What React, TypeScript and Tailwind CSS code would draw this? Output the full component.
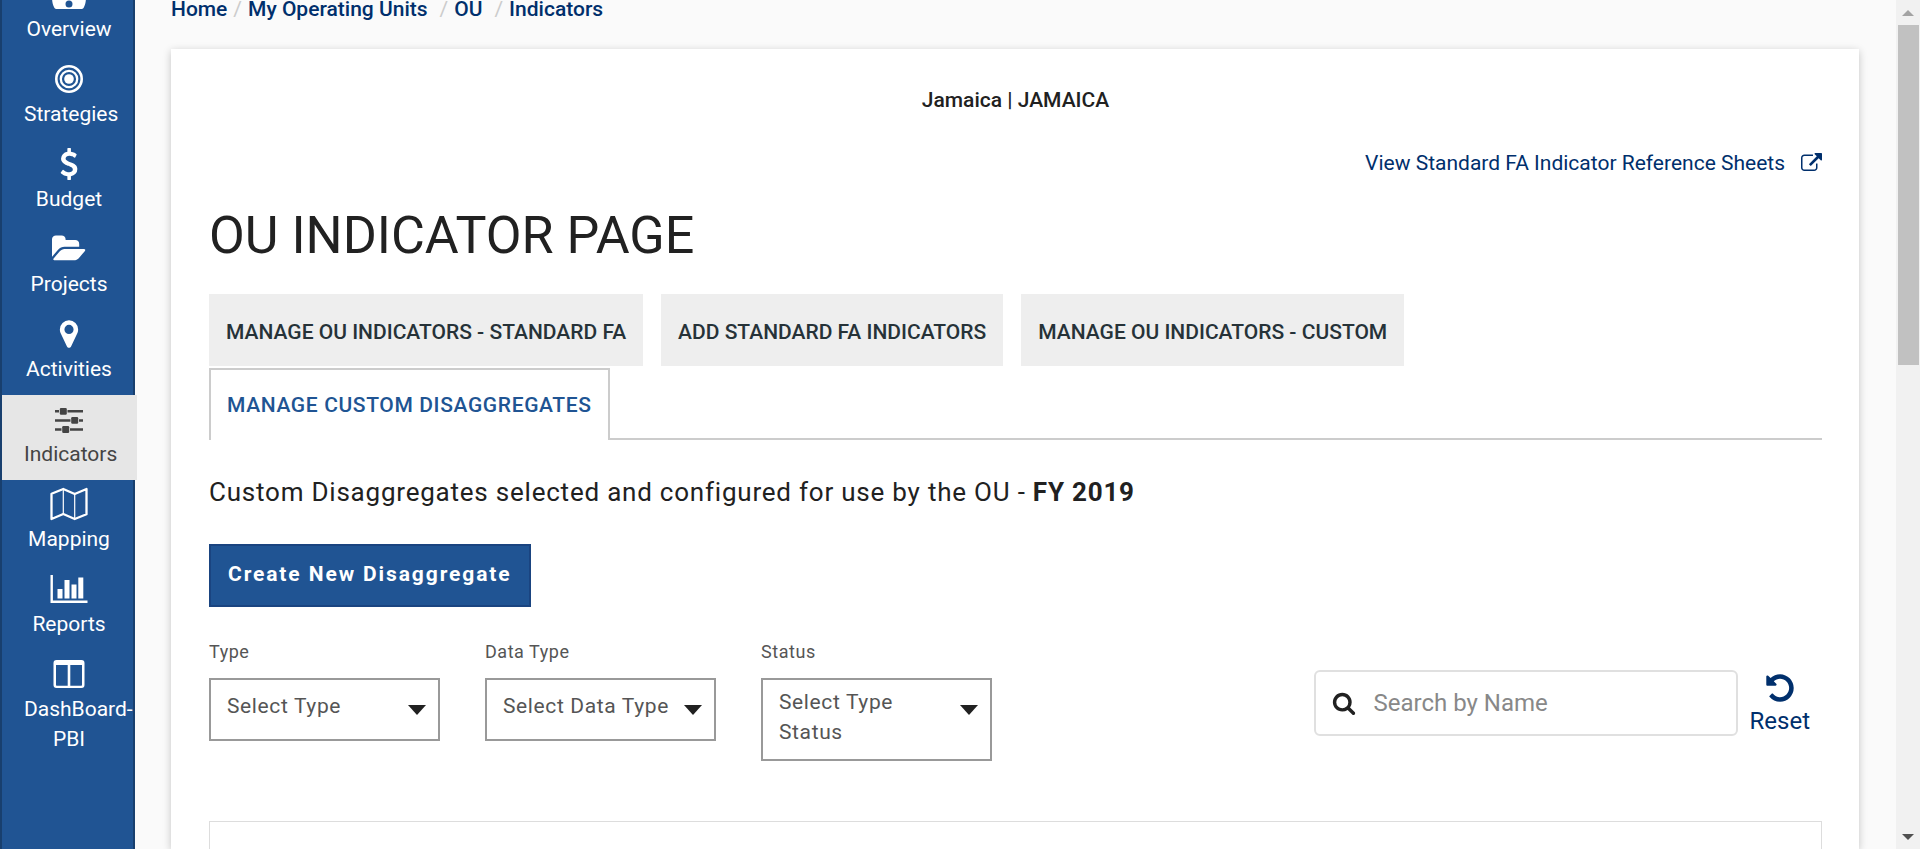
import React from "react";

type IconProps = { className?: string };

const OverviewIcon = ({ className }: IconProps) => (
  <svg viewBox="0 0 34 32" className={className} fill="currentColor" aria-hidden="true">
    <path
      fillRule="evenodd"
      d="M17 2A17 17 0 0 0 0 19c0 4 .6 7.300 2.200 10.600.4.900 1 1.400 1.900 1.400h25.800c.9 0 1.500-.5 1.900-1.400C33.400 26.300 34 23 34 19A17 17 0 0 0 17 2zm0 20.500a3.500 3.500 0 1 1 0 7 3.500 3.500 0 0 1 0-7zM5.500 17a2 2 0 1 1 0 4 2 2 0 0 1 0-4zm23 0a2 2 0 1 1 0 4 2 2 0 0 1 0-4zM17 5.500a2 2 0 1 1 0 4 2 2 0 0 1 0-4z"
    />
  </svg>
);

const StrategiesIcon = ({ className }: IconProps) => (
  <svg viewBox="0 0 32 32" className={className} fill="none" stroke="currentColor" aria-hidden="true">
    <circle cx="16" cy="16" r="12.700" strokeWidth="2.600" />
    <circle cx="16" cy="16" r="8.200" strokeWidth="2.300" />
    <circle cx="16" cy="16" r="4.800" fill="currentColor" stroke="none" />
  </svg>
);

const BudgetIcon = ({ className }: IconProps) => (
  <svg viewBox="0 0 1792 1792" className={className} fill="currentColor" aria-hidden="true">
    <path d="M1362 1185q0 153-99.500 263.500t-258.500 136.500v175q0 14-9 23t-23 9h-135q-13 0-22.500-9.500t-9.500-22.500v-175q-66-9-127.500-31t-101.500-44.500-74-48-46.500-37.500-17.500-18q-17-21-2-41l103-135q7-10 23-12 15-2 24 9l2 2q113 99 243 125 37 8 74 8 81 0 142.500-43t61.500-122q0-28-15-53t-33.500-42-58.500-37.500-66-32-80-32.500q-39-16-61.500-25t-61.500-26.500-62.500-31-56.500-35.500-53.500-42.500-43.500-49-35.500-58-21-66.500-8.500-78q0-138 98-242t255-134v-180q0-13 9.500-22.500t22.500-9.500h135q14 0 23 9t9 23v176q57 6 110.500 23t87 33.500 63.500 37.500 39 29 15 14q17 18 5 38l-81 146q-8 15-23 16-14 3-27-7-3-3-14.500-12t-39-26.500-58.500-32-74.500-26-85.500-11.500q-95 0-155 43t-60 111q0 26 8.500 48t29.500 41.500 39.500 33 56 31 60.500 27 70 27.500q53 20 81 31.500t76 35 75.500 42.500 62 50 53 63.500 31.500 76.500 13 94z" />
  </svg>
);

const ProjectsIcon = ({ className }: IconProps) => (
  <svg viewBox="0 0 1920 1792" className={className} fill="currentColor" aria-hidden="true">
    <path d="M1879 952q0 31-31 66l-336 396q-43 51-120.500 86.500t-143.500 35.500h-1088q-34 0-60.500-13t-26.500-43q0-31 31-66l336-396q43-51 120.500-86.500t143.500-35.500h1088q34 0 60.500 13t26.500 43zm-343-344v160h-832q-94 0-197 47.500t-164 119.500l-337 396-5 6q0-4-.5-12.500t-.5-12.500v-960q0-92 66-158t158-66h320q92 0 158 66t66 158v32h544q92 0 158 66t66 158z" />
  </svg>
);

const ActivitiesIcon = ({ className }: IconProps) => (
  <svg viewBox="0 0 1792 1792" className={className} fill="currentColor" aria-hidden="true">
    <path d="M1152 640q0-106-75-181t-181-75-181 75-75 181 75 181 181 75 181-75 75-181zm256 0q0 109-33 179l-364 774q-16 33-47.500 52t-67.500 19-67.500-19-46.500-52l-365-774q-33-70-33-179 0-212 150-362t362-150 362 150 150 362z" />
  </svg>
);

const IndicatorsIcon = ({ className }: IconProps) => (
  <svg viewBox="0 0 32 32" className={className} fill="currentColor" aria-hidden="true">
    <path d="M2 7h4v2.500H2zM14.500 7H30v2.500H14.500zM2 16.200h15.500v2.500H2zM26 16.200h4v2.500h-4zM2 25.300h6.500v2.500H2zM17 25.300h13v2.500H17z" />
    <rect x="6.800" y="4.900" width="7" height="6.800" rx="1.200" />
    <rect x="18.200" y="14" width="7" height="6.800" rx="1.200" />
    <rect x="9.200" y="23.100" width="7" height="6.800" rx="1.200" />
  </svg>
);

const MappingIcon = ({ className }: IconProps) => (
  <svg viewBox="0 0 38 34" className={className} fill="none" stroke="currentColor" strokeLinejoin="round" aria-hidden="true">
    <path strokeWidth="2.300" d="M1.500 6.800 13.300 2l11.400 5L36.500 2v25.300L24.700 32l-11.400-5L1.500 32z" />
    <path strokeWidth="1.200" d="M13.300 2v25M24.700 7v25" />
  </svg>
);

const ReportsIcon = ({ className }: IconProps) => (
  <svg viewBox="0 0 38 32" className={className} fill="currentColor" aria-hidden="true">
    <path d="M.5 2h2.400v25.600h34.600V30H.5zM7.500 16h5v9.500h-5zM14.500 7h5v18.500h-5zM21.500 11.500h5v14h-5zM28.300 4.500h5v21h-5z" />
  </svg>
);

const DashboardIcon = ({ className }: IconProps) => (
  <svg viewBox="0 0 32 32" className={className} fill="currentColor" aria-hidden="true">
    <path
      fillRule="evenodd"
      d="M3.500 2h25A3 3 0 0 1 31.500 5v22a3 3 0 0 1-3 3h-25a3 3 0 0 1-3-3V5a3 3 0 0 1 3-3zM3 7v20q0 .7.7.7h11V7zm14.300 0v20.700h11q.7 0 .7-.7V7z"
    />
  </svg>
);

const ExternalLinkIcon = ({ className }: IconProps) => (
  <svg viewBox="0 0 1792 1792" className={className} fill="currentColor" aria-hidden="true">
    <path d="M1408 928v320q0 119-84.500 203.500t-203.500 84.500h-832q-119 0-203.500-84.500t-84.500-203.500v-832q0-119 84.500-203.500t203.500-84.500h704q14 0 23 9t9 23v64q0 14-9 23t-23 9h-704q-66 0-113 47t-47 113v832q0 66 47 113t113 47h832q66 0 113-47t47-113v-320q0-14 9-23t23-9h64q14 0 23 9t9 23zm384-864v512q0 26-19 45t-45 19-45-19l-176-176-652 652q-10 10-23 10t-23-10l-114-114q-10-10-10-23t10-23l652-652-176-176q-19-19-19-45t19-45 45-19h512q26 0 45 19t19 45z" />
  </svg>
);

const SearchIcon = ({ className }: IconProps) => (
  <svg viewBox="0 0 1792 1792" className={className} fill="currentColor" aria-hidden="true">
    <path d="M1216 832q0-185-131.500-316.500t-316.500-131.500-316.500 131.500-131.500 316.500 131.500 316.500 316.500 131.500 316.500-131.500 131.500-316.500zm512 832q0 52-38 90t-90 38q-54 0-90-38l-343-342q-179 124-399 124-143 0-273.500-55.500t-225-150-150-225-55.500-273.500 55.500-273.500 150-225 225-150 273.500-55.500 273.500 55.500 225 150 150 225 55.500 273.500q0 220-124 399l343 343q37 37 37 90z" />
  </svg>
);

const UndoIcon = ({ className }: IconProps) => (
  <svg viewBox="0 0 1792 1792" className={className} fill="currentColor" aria-hidden="true">
    <path d="M1664 896q0 156-61 298t-164 245-245 164-298 61q-172 0-327-72.500t-264-204.500q-7-10-6.500-22.500t8.500-20.500l137-138q10-9 25-9 16 2 23 12 73 95 179 147t225 52q104 0 198.500-40.500t163.500-109.500 109.500-163.500 40.500-198.500-40.500-198.500-109.500-163.500-163.500-109.500-198.500-40.500q-98 0-188 35.500t-160 101.500l137 138q31 30 14 69-17 40-59 40h-448q-26 0-45-19t-19-45v-448q0-42 40-59 39-17 69 14l130 129q107-101 244.500-156.500t284.500-55.500q156 0 298 61t245 164 164 245 61 298z" />
  </svg>
);

const navItems = [
  { label: "Overview", Icon: OverviewIcon, size: "h-8 w-[34px]" },
  { label: "Strategies", Icon: StrategiesIcon, size: "size-8" },
  { label: "Budget", Icon: BudgetIcon, size: "size-8" },
  { label: "Projects", Icon: ProjectsIcon, size: "h-8 w-[34px]" },
  { label: "Activities", Icon: ActivitiesIcon, size: "size-8" },
  { label: "Indicators", Icon: IndicatorsIcon, size: "size-8", active: true },
  { label: "Mapping", Icon: MappingIcon, size: "h-[34px] w-[38px]" },
  { label: "Reports", Icon: ReportsIcon, size: "h-8 w-[38px]" },
  { label: "DashBoard-PBI", Icon: DashboardIcon, size: "size-8" },
];

function Sidebar() {
  return (
    <nav aria-label="Main" className="z-10 w-[135px] shrink-0 border-x-2 border-[#183f6e] bg-[#205493]">
      <ul className="-mt-[30px]">
        {navItems.map(({ label, Icon, size, active }) => (
          <li key={label}>
            <a
              href="#"
              aria-current={active ? "page" : undefined}
              className={
                active
                  ? "-mr-1 block min-h-[85px] bg-[#e6e6e6] pt-2 pr-[23px] pl-[22px] text-[#444444]"
                  : "-mr-1 block min-h-[85px] pt-2 pr-[23px] pl-[22px] text-white"
              }
            >
              <span className="flex h-8 items-center justify-center">
                <Icon className={`shrink-0 ${size}`} />
              </span>
              <span className="mt-1 block text-center text-[21px] leading-[30px]">{label}</span>
            </a>
          </li>
        ))}
      </ul>
    </nav>
  );
}

const crumbs = ["Home", "My Operating Units", "OU", "Indicators"];

function Breadcrumbs() {
  return (
    <nav aria-label="Breadcrumb" className="-mt-1.5">
      <ol className="flex text-[21px] leading-[30px] font-medium text-[#002f6c]">
        {crumbs.map((crumb, i) => (
          <li key={crumb} className="flex">
            {i > 0 && (
              <span className={i === 1 ? "mx-1.5 font-normal text-[#cccccc]" : "mr-1.5 ml-3 font-normal text-[#cccccc]"}>/</span>
            )}
            <a href="#">{crumb}</a>
          </li>
        ))}
      </ol>
    </nav>
  );
}

const tabs = ["MANAGE OU INDICATORS - STANDARD FA", "ADD STANDARD FA INDICATORS", "MANAGE OU INDICATORS - CUSTOM"];

function Tabs() {
  return (
    <div role="tablist" className="mt-[25px]">
      <div className="flex gap-[18px]">
        {tabs.map((tab) => (
          <button
            key={tab}
            type="button"
            role="tab"
            aria-selected="false"
            className="h-[72px] bg-[#eeeeee] px-[17px] pt-1.5 text-[21px] font-medium text-[#263238]"
          >
            {tab}
          </button>
        ))}
      </div>
      <div className="mt-0.5 flex">
        <button
          type="button"
          role="tab"
          aria-selected="true"
          className="h-[72px] border-2 border-b-0 border-[#cccccc] px-4 pt-0.5 text-[21px] font-medium tracking-[0.03em] text-[#205493]"
        >
          MANAGE CUSTOM DISAGGREGATES
        </button>
        <div className="flex-1 border-b-2 border-[#cccccc]" />
      </div>
    </div>
  );
}

type FilterProps = { id: string; label: string; placeholder: string; wrap?: boolean };

function Filter({ id, label, placeholder, wrap }: FilterProps) {
  return (
    <div className="w-[231px]">
      <label htmlFor={id} className="block text-[18px] leading-7 tracking-[0.03em] text-[#555555]">
        {label}
      </label>
      <div className="relative mt-3">
        <select
          id={id}
          className={
            wrap
              ? "block h-[83px] w-full [appearance:base-select] border-2 border-[#999999] bg-white pt-[7px] pr-12 pl-4 text-left text-[21px] leading-[30px] tracking-[0.03em] whitespace-normal text-[#555555] [&::picker-icon]:hidden"
              : "block h-[63px] w-full appearance-none border-2 border-[#999999] bg-white pr-8 pb-1.5 pl-4 text-[21px] tracking-[0.03em] text-[#555555]"
          }
        >
          <option>{placeholder}</option>
        </select>
        <svg viewBox="0 0 18 10" className="pointer-events-none absolute top-[27px] right-3.5 h-2.5 w-[18px]" fill="#212121" aria-hidden="true">
          <path d="M0 0h18l-9 10z" />
        </svg>
      </div>
    </div>
  );
}

function Scrollbar() {
  return (
    <div aria-hidden="true" className="flex w-6 shrink-0 flex-col items-center bg-[#f1f1f1]">
      <span className="flex h-[25px] items-center">
        <svg viewBox="0 0 12 6" className="h-1.5 w-3" fill="#a3a3a3">
          <path d="M0 6h12L6 0z" />
        </svg>
      </span>
      <span className="h-[340px] w-[21px] bg-[#c1c1c1]" />
      <span className="mt-auto flex h-[25px] items-center">
        <svg viewBox="0 0 12 6" className="h-1.5 w-3" fill="#505050">
          <path d="M0 0h12L6 6z" />
        </svg>
      </span>
    </div>
  );
}

export default function App() {
  return (
    <div className="flex h-screen overflow-hidden bg-[#fafafa] font-[Roboto,sans-serif] text-[#212121]">
      <Sidebar />
      <main className="flex min-w-0 flex-1 flex-col pr-[37px] pl-9">
        <Breadcrumbs />
        <section className="mt-[25px] flex flex-1 flex-col bg-white pt-9 pr-[37px] pl-[38px] shadow-[0_2px_8px_rgba(0,0,0,0.22)]">
          <p className="text-center text-[21px] leading-[30px] font-medium">Jamaica | JAMAICA</p>
          <div className="mt-[33px] flex justify-end">
            <a href="#" className="flex items-center gap-4 text-[21px] leading-[30px] text-[#002f6c]">
              View Standard FA Indicator Reference Sheets
              <ExternalLinkIcon className="size-[21px]" />
            </a>
          </div>
          <h1 className="mt-[25px] text-[52px] leading-[66px]">OU INDICATOR PAGE</h1>
          <Tabs />
          <p className="mt-8 text-[26px] leading-10 tracking-[0.03em]">
            Custom Disaggregates selected and configured for use by the OU - <b>FY 2019</b>
          </p>
          <div className="mt-8">
            <button
              type="button"
              className="h-[63px] border-2 border-[#1a4480] bg-[#205493] px-[17px] pb-0.5 text-[21px] font-bold tracking-[0.09em] text-white"
            >
              Create New Disaggregate
            </button>
          </div>
          <div className="mt-[31px] flex items-start">
            <div className="flex gap-[45px]">
              <Filter id="type" label="Type" placeholder="Select Type" />
              <Filter id="data-type" label="Data Type" placeholder="Select Data Type" />
              <Filter id="status" label="Status" placeholder="Select Type Status" wrap />
            </div>
            <div className="mt-8 mr-3 ml-auto flex items-start gap-3">
              <label className="flex h-[66px] w-[424px] items-center gap-[18px] rounded-md border-2 border-[#e0e0e0] px-4">
                <SearchIcon className="size-6 shrink-0" />
                <input
                  type="text"
                  aria-label="Search by Name"
                  placeholder="Search by Name"
                  className="w-full min-w-0 text-[24px] outline-none placeholder:text-[#888888]"
                />
              </label>
              <button type="button" className="flex flex-col items-center pt-0.5 text-[24px] leading-[34px] text-[#002f6c]">
                <UndoIcon className="size-8" />
                Reset
              </button>
            </div>
          </div>
          <div className="mt-[60px] flex-1 border border-b-0 border-[#dddddd]" />
        </section>
      </main>
      <Scrollbar />
    </div>
  );
}
